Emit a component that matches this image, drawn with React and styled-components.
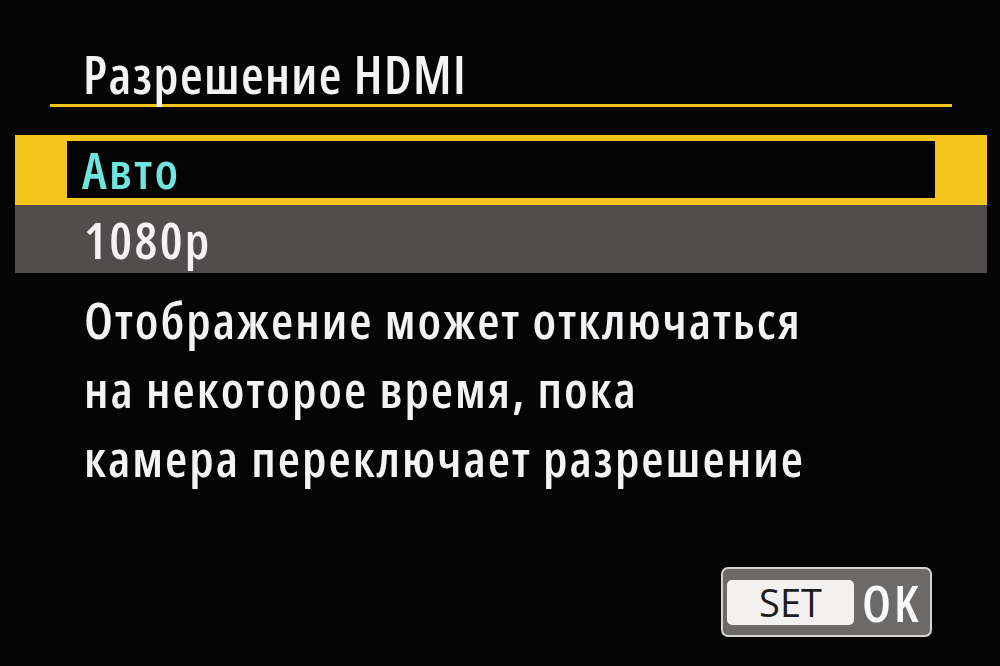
import { createGlobalStyle } from "styled-components";
import styled from "styled-components";

const GlobalStyle = createGlobalStyle`
  html, body {
    margin: 0;
    padding: 0;
    background: #000;
  }
  body {
    font-family: "Open Sans", "Noto Sans", sans-serif;
    font-stretch: 75%;
  }
`;

const Screen = styled.div`
  width: 1000px;
  height: 666px;
  overflow: hidden;
  background: #050506;
  color: #f4f2f4;
  display: flex;
  flex-direction: column;
`;

const Header = styled.div`
  margin: 0 48px 0 50px;
  padding: 44px 0 0 33px;
  border-bottom: 3px solid #f2c41c;
`;

const Title = styled.h1`
  margin: 0;
  font-size: 52px;
  line-height: 60px;
  font-weight: 600;
  letter-spacing: 1.4px;
`;

const List = styled.div`
  margin: 28px 13px 0 15px;
  display: flex;
  flex-direction: column;
`;

const Selected = styled.div`
  background: #f2c41c;
  padding: 6px 52px 7px 52px;
`;

const ItemText = styled.div`
  font-size: 51px;
  font-weight: 600;
  letter-spacing: 2.4px;
`;

const SelectedInner = styled(ItemText)`
  background: #030303;
  padding-left: 15px;
  height: 57px;
  line-height: 57px;
  color: #6de6df;
`;

const Option = styled(ItemText)`
  background: #504d4c;
  height: 68px;
  padding-left: 69px;
  line-height: 68px;
`;

const Note = styled.p`
  margin: 12px 0 0 84px;
  font-size: 51px;
  line-height: 69px;
  font-weight: 600;
  letter-spacing: 2px;
`;

const Footer = styled.div`
  display: flex;
  justify-content: flex-end;
  padding-right: 68px;
  margin-top: 75px;
`;

const SetButton = styled.div`
  box-sizing: content-box;
  width: 203px;
  height: 66px;
  border: 2px solid #d6d3cf;
  border-radius: 7px;
  background: #6c6a69;
  display: flex;
  align-items: center;
  padding-left: 4px;
`;

const SetKey = styled.span`
  width: 127px;
  height: 45px;
  border-radius: 5px;
  background: #f3f1ef;
  color: #1d1c1f;
  font-size: 38px;
  font-stretch: 100%;
  line-height: 45px;
  text-align: center;
  font-weight: 400;
`;

const OkLabel = styled.span`
  margin-left: 8px;
  font-size: 51px;
  line-height: 66px;
  font-weight: 600;
  letter-spacing: 3px;
  color: #fbfafa;
`;

export default function App() {
  return (
    <>
      <GlobalStyle />
      <Screen>
        <Header>
          <Title>Разрешение HDMI</Title>
        </Header>
        <List>
          <Selected>
            <SelectedInner>Авто</SelectedInner>
          </Selected>
          <Option>1080p</Option>
        </List>
        <Note>
          Отображение может отключаться
          <br />
          на некоторое время, пока
          <br />
          камера переключает разрешение
        </Note>
        <Footer>
          <SetButton>
            <SetKey>SET</SetKey>
            <OkLabel>OK</OkLabel>
          </SetButton>
        </Footer>
      </Screen>
    </>
  );
}
